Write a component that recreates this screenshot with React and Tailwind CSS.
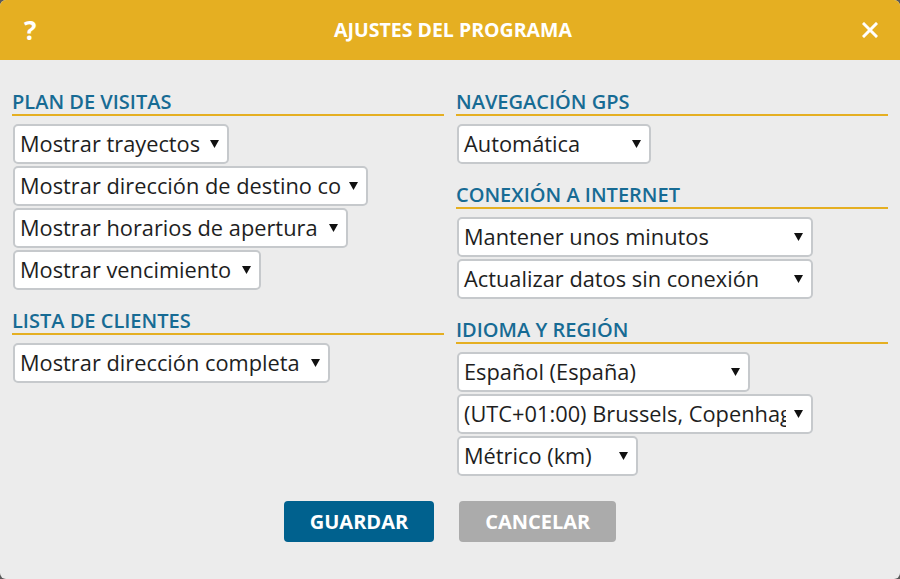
import React from "react";

const font = { fontFamily: '"Open Sans", "Noto Sans", sans-serif' };

function Arrow() {
  return (
    <svg width="9" height="8" viewBox="0 0 9 8" className="block">
      <polygon points="0,0 9,0 4.5,8" fill="#111" />
    </svg>
  );
}

function Select({ text, w }) {
  return (
    <div
      className={`ml-px flex h-[40px] items-center rounded-[5px] border-2 border-[#c6c9cc] bg-white ${w}`}
    >
      <span className="min-w-0 flex-1 overflow-hidden whitespace-nowrap pl-[5px] text-[21.8px] leading-[34px] text-[#1e1e1e]">
        {text}
      </span>
      <span className="ml-[8px] mr-[8px] flex items-center">
        <Arrow />
      </span>
    </div>
  );
}

function Section({ title, first, children }) {
  return (
    <div className={first ? "" : "mt-[19px]"}>
      <div className="border-b-2 border-[#e5af22] text-[20px] font-semibold leading-[24px] text-[#176b94]">
        {title}
      </div>
      <div className="mt-2 flex flex-col items-start gap-[2px]">{children}</div>
    </div>
  );
}

export default function App() {
  return (
    <div className="h-[579px] w-[900px] bg-[#5a5a5a]" style={font}>
      <div className="flex h-full w-full flex-col overflow-hidden rounded-[6px] bg-[#ececec]">
        <div className="flex h-[60px] shrink-0 items-center justify-between bg-[#e5af22] pl-[24px] pr-[22px] text-white">
          <span className="w-[20px] text-[26px] font-bold leading-none">?</span>
          <span className="text-[19.5px] font-bold leading-none">AJUSTES DEL PROGRAMA</span>
          <svg width="16" height="16" viewBox="0 0 16 16" className="block">
            <path d="M2 2 L14 14 M14 2 L2 14" stroke="#fff" strokeWidth="3" strokeLinecap="square" />
          </svg>
        </div>
        <div className="flex flex-col px-3 pt-[30px]">
          <div className="grid grid-cols-2 gap-3">
            <div>
              <Section title="PLAN DE VISITAS" first>
                <Select text="Mostrar trayectos" w="w-[216px]" />
                <Select text="Mostrar dirección de destino completa" w="w-[355px]" />
                <Select text="Mostrar horarios de apertura" w="w-[335px]" />
                <Select text="Mostrar vencimiento" w="w-[248px]" />
              </Section>
              <Section title="LISTA DE CLIENTES">
                <Select text="Mostrar dirección completa" w="w-[317px]" />
              </Section>
            </div>
            <div>
              <Section title="NAVEGACIÓN GPS" first>
                <Select text="Automática" w="w-[194px]" />
              </Section>
              <Section title="CONEXIÓN A INTERNET">
                <Select text="Mantener unos minutos" w="w-[356px]" />
                <Select text="Actualizar datos sin conexión" w="w-[356px]" />
              </Section>
              <Section title="IDIOMA Y REGIÓN">
                <Select text="Español (España)" w="w-[293px]" />
                <Select text="(UTC+01:00) Brussels, Copenhagen, Madrid, Paris" w="w-[356px]" />
                <Select text="Métrico (km)" w="w-[181px]" />
              </Section>
            </div>
          </div>
          <div className="mt-[25px] flex justify-center gap-[25px]">
            <button className="h-[41px] rounded-[4px] bg-[#00618e] px-[26px] text-[20px] font-bold text-white">
              GUARDAR
            </button>
            <button className="h-[41px] rounded-[4px] bg-[#ababab] px-[26px] text-[20px] font-bold text-white">
              CANCELAR
            </button>
          </div>
        </div>
      </div>
    </div>
  );
}
